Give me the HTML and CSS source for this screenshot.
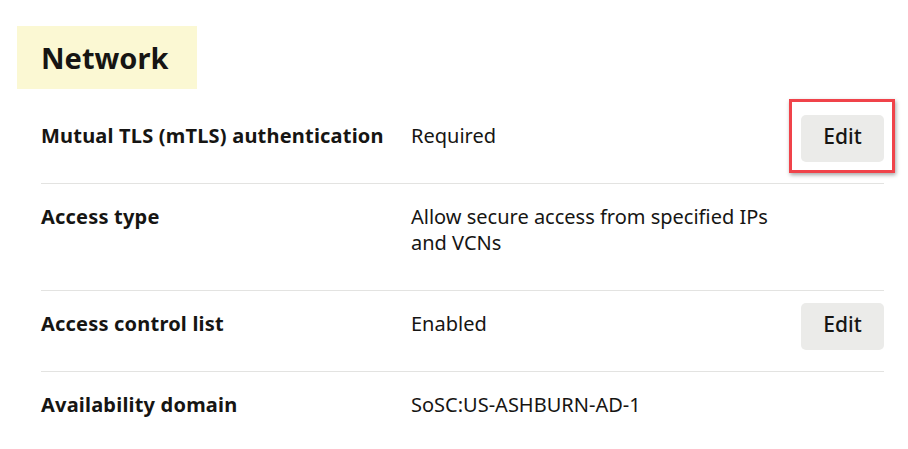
FILE: index.html
```html
<!DOCTYPE html>
<html lang="en">
<head>
<meta charset="utf-8">
<title>Network</title>
<link rel="stylesheet" href="styles.css">
</head>
<body>
<section class="panel">
  <h2 class="title">Network</h2>
  <div class="rows">
    <div class="row">
      <div class="label">Mutual TLS (mTLS) authentication</div>
      <div class="value">Required</div>
      <div class="action"><button class="btn btn-highlight">Edit</button></div>
    </div>
    <div class="row">
      <div class="label">Access type</div>
      <div class="value">Allow secure access from specified IPs<br>and VCNs</div>
      <div class="action"></div>
    </div>
    <div class="row">
      <div class="label">Access control list</div>
      <div class="value">Enabled</div>
      <div class="action"><button class="btn">Edit</button></div>
    </div>
    <div class="row row-last">
      <div class="label">Availability domain</div>
      <div class="value">SoSC:US-ASHBURN-AD-1</div>
      <div class="action"></div>
    </div>
  </div>
</section>
</body>
</html>
```
FILE: styles.css
```css
html, body {
  margin: 0;
  padding: 0;
  background: #ffffff;
}
body {
  font-family: "Noto Sans", "Open Sans", sans-serif;
  color: #161513;
}
.panel {
  padding: 26px 24px 0 17px;
}
.title {
  display: inline-block;
  margin: 0;
  background: #fbf8d3;
  padding: 0 29px 0 24px;
  height: 63px;
  line-height: 63px;
  font-size: 29px;
  font-weight: 700;
}
.rows {
  margin-top: 14px;
  margin-left: 24px;
  width: 843px;
}
.row {
  display: grid;
  grid-template-columns: 370px 1fr 83px;
  padding: 12px 0 21px;
  border-bottom: 1px solid #e3e3e1;
}
.row-last {
  border-bottom: none;
}
.label, .value {
  padding: 8px 0 13px;
  font-size: 20px;
  line-height: 26px;
}
.label {
  font-weight: 700;
  letter-spacing: 0.2px;
}
.btn {
  position: relative;
  width: 83px;
  height: 47px;
  border: none;
  border-radius: 5px;
  background: #ebebe9;
  color: #161513;
  font-family: inherit;
  font-size: 21px;
  font-weight: 500;
  padding: 0 0 5px;
}
.btn-highlight::after {
  content: "";
  position: absolute;
  left: -12px;
  top: -16px;
  right: -11px;
  bottom: -11px;
  border: 3px solid #f0434a;
  box-shadow: 1px 2px 4px rgba(0,0,0,0.35);
}
```
